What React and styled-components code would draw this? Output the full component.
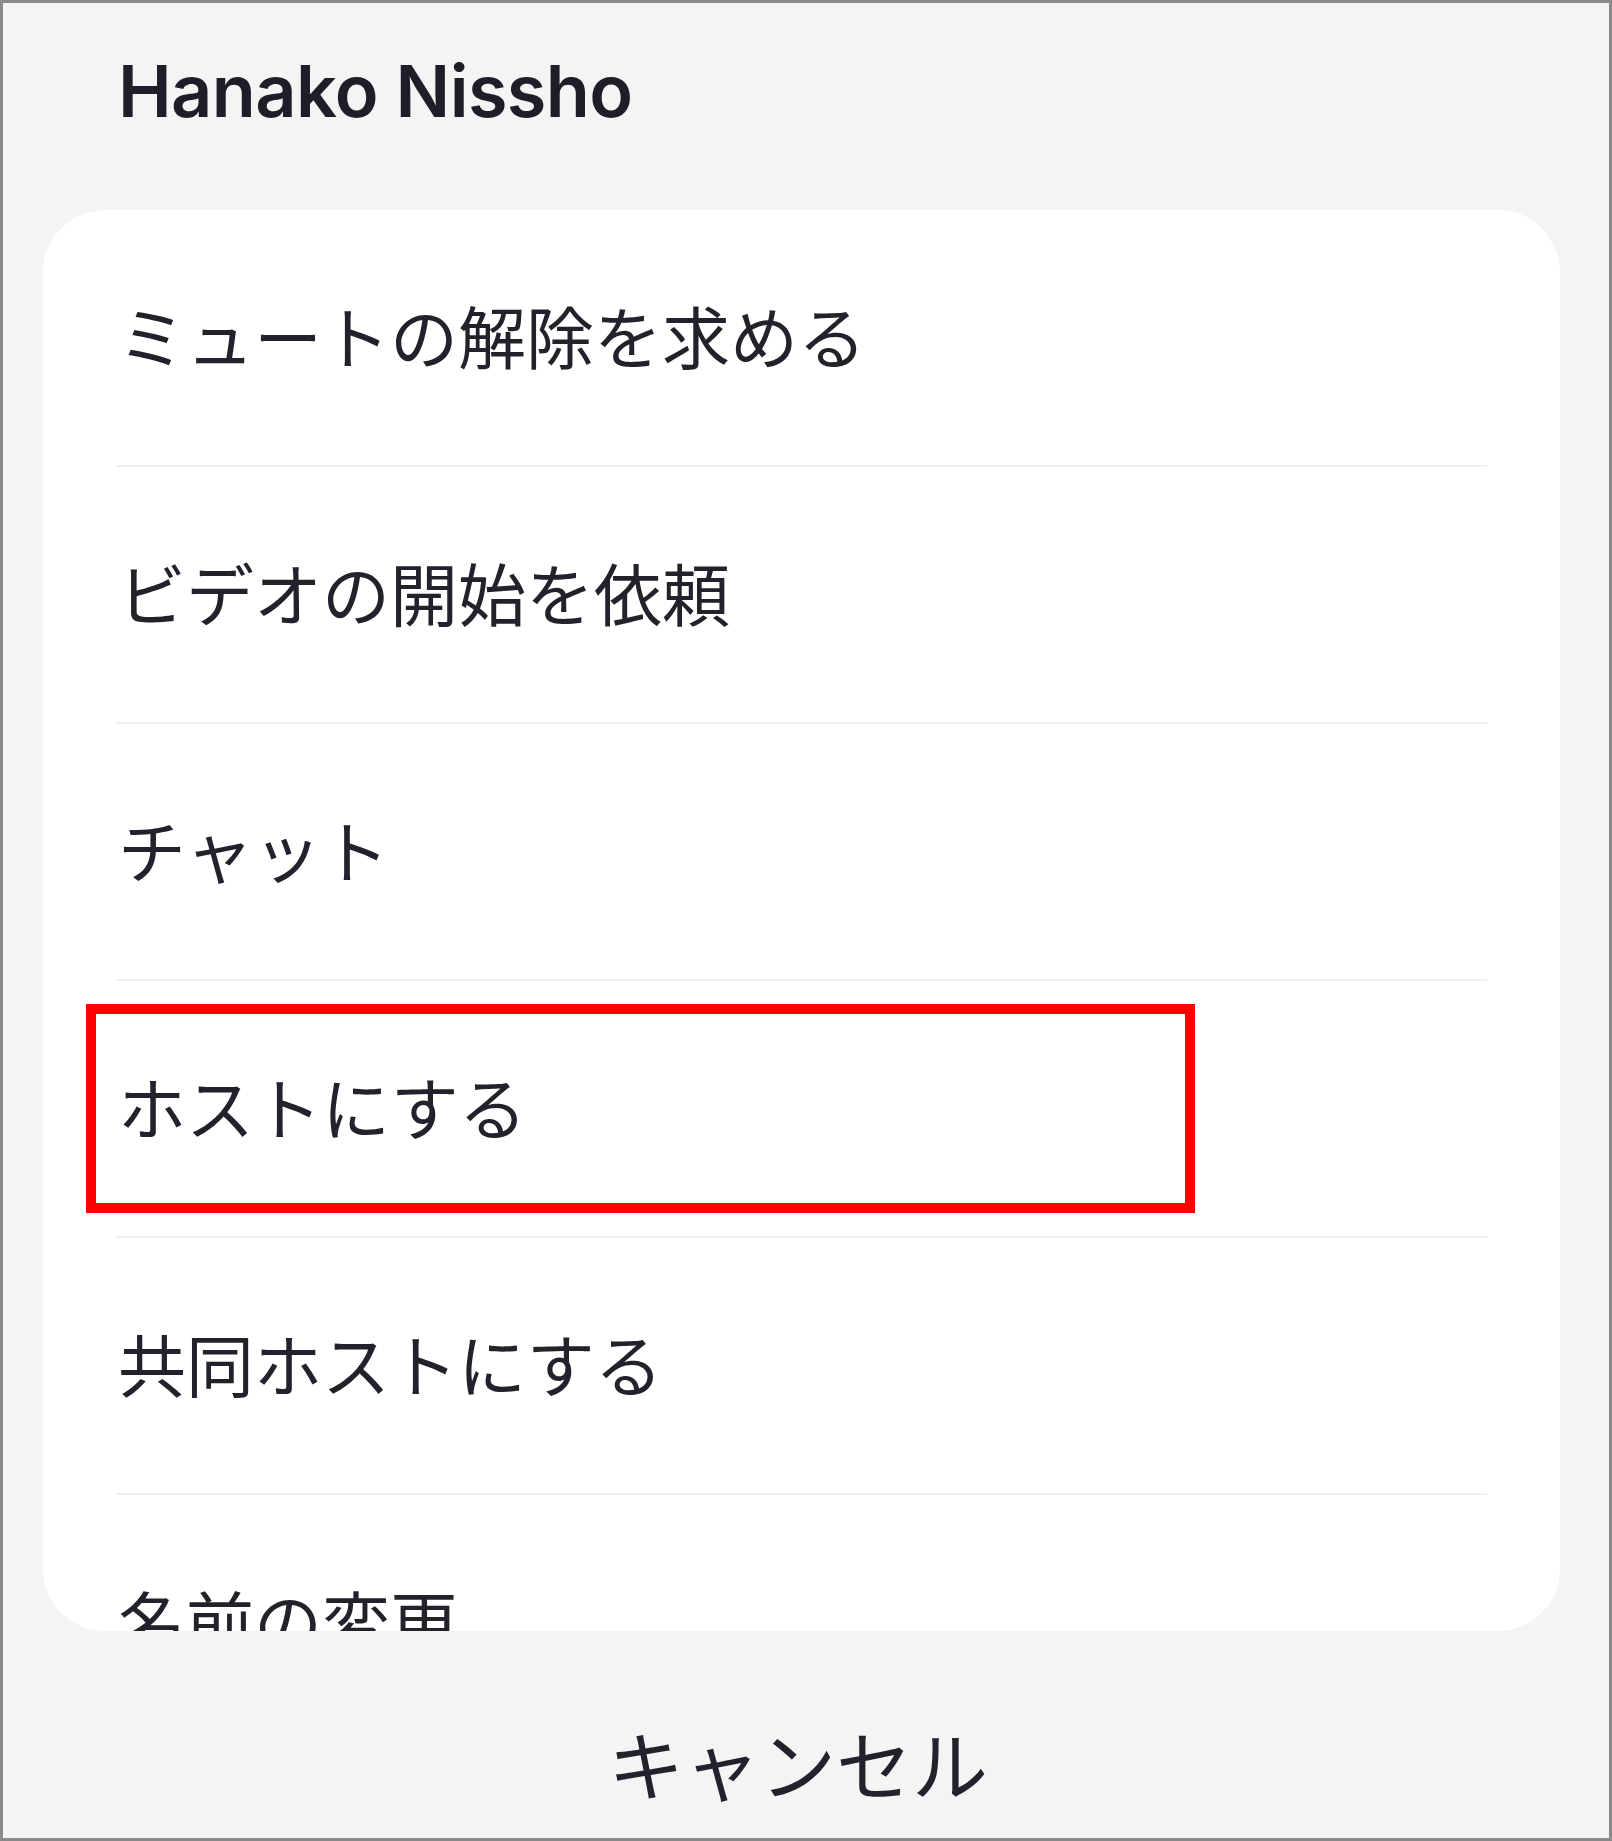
import React from "react";
import styled, { createGlobalStyle } from "styled-components";

const GlobalStyle = createGlobalStyle`
  html, body {
    margin: 0;
    padding: 0;
    background: #ffffff;
  }
  * {
    box-sizing: border-box;
  }
`;

const items = [
  "ミュートの解除を求める",
  "ビデオの開始を依頼",
  "チャット",
  "ホストにする",
  "共同ホストにする",
  "名前の変更",
];

const Sheet = () => {
  return (
    <Screen>
      <Title>Hanako Nissho</Title>
      <Card>
        {items.map((label, i) => (
          <Row key={label}>
            <Label>{label}</Label>
            {i === 3 && <Highlight />}
          </Row>
        ))}
      </Card>
      <Cancel>キャンセル</Cancel>
    </Screen>
  );
};

export default function App() {
  return (
    <>
      <GlobalStyle />
      <Sheet />
    </>
  );
}

const Screen = styled.div`
  width: 1612px;
  height: 1841px;
  border: 3px solid #8a8a8a;
  background: #f4f4f4;
  display: flex;
  flex-direction: column;
  overflow: hidden;
`;

const Title = styled.h1`
  margin: 0;
  padding: 42px 0 0 115px;
  font-family: Inter, "Noto Sans", sans-serif;
  font-weight: 600;
  font-size: 72px;
  line-height: 91px;
  letter-spacing: -0.6px;
  color: #1e1e28;
`;

const Card = styled.div`
  margin: 74px 0 0 40px;
  width: 1517px;
  height: 1421px;
  background: #ffffff;
  border-radius: 62px;
  overflow: hidden;
`;

const Row = styled.div`
  position: relative;
  margin: 0 73px;
  height: 257px;
  border-bottom: 2px solid #efeff3;
  display: flex;
  align-items: center;
`;

const Label = styled.span`
  font-family: "Noto Sans CJK JP", "Noto Sans", sans-serif;
  font-size: 68px;
  line-height: 68px;
  color: #22222c;
  padding: 0 0 6px 2px;
`;

const Highlight = styled.div`
  position: absolute;
  left: -30px;
  top: 23px;
  width: 1109px;
  height: 209px;
  border: 10px solid #ff0000;
  pointer-events: none;
`;

const Cancel = styled.div`
  margin-top: 93px;
  text-align: center;
  font-family: "Noto Sans CJK JP", "Noto Sans", sans-serif;
  font-size: 76px;
  line-height: 76px;
  color: #22222c;
  padding-right: 16px;
`;
